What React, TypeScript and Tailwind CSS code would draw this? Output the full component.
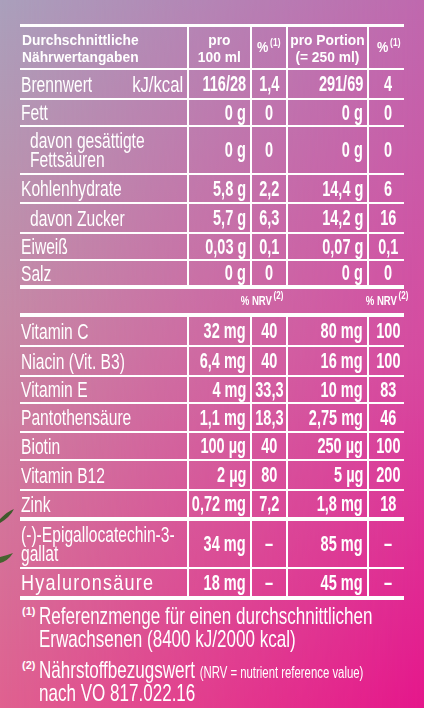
import React from 'react'

const GRID = 'grid grid-cols-[167px_63px_36px_81px_41px]'

type Row = {
  label: React.ReactNode
  v: string[]
  cls: string
  indent?: boolean
  unit?: string
  wide?: boolean
}

const top: Row[] = [
  { label: 'Brennwert', unit: 'kJ/kcal', v: ['116/28', '1,4', '291/69', '4'], cls: 'h-[30px] border-t-2' },
  { label: 'Fett', v: ['0 g', '0', '0 g', '0'], cls: 'h-[27px] border-t-2' },
  { label: <>davon gesättigte<br />Fettsäuren</>, indent: true, v: ['0 g', '0', '0 g', '0'], cls: 'h-[48px] border-t-2' },
  { label: 'Kohlenhydrate', v: ['5,8 g', '2,2', '14,4 g', '6'], cls: 'h-[29px] border-t-2' },
  { label: 'davon Zucker', indent: true, v: ['5,7 g', '6,3', '14,2 g', '16'], cls: 'h-[30px] border-t-2' },
  { label: 'Eiweiß', v: ['0,03 g', '0,1', '0,07 g', '0,1'], cls: 'h-[27px] border-t-2' },
  { label: 'Salz', v: ['0 g', '0', '0 g', '0'], cls: 'h-[30px] border-t-2 border-b-4' },
]

const vit: Row[] = [
  { label: 'Vitamin C', v: ['32 mg', '40', '80 mg', '100'], cls: 'h-[32px] border-t-4' },
  { label: 'Niacin (Vit. B3)', v: ['6,4 mg', '40', '16 mg', '100'], cls: 'h-[30px] border-t-2' },
  { label: 'Vitamin E', v: ['4 mg', '33,3', '10 mg', '83'], cls: 'h-[27px] border-t-2' },
  { label: 'Pantothensäure', v: ['1,1 mg', '18,3', '2,75 mg', '46'], cls: 'h-[29px] border-t-2' },
  { label: 'Biotin', v: ['100 µg', '40', '250 µg', '100'], cls: 'h-[28px] border-t-2' },
  { label: 'Vitamin B12', v: ['2 µg', '80', '5 µg', '200'], cls: 'h-[30px] border-t-2' },
  { label: 'Zink', v: ['0,72 mg', '7,2', '1,8 mg', '18'], cls: 'h-[28px] border-t-2' },
  { label: <>(-)-Epigallocatechin-3-<br />gallat</>, v: ['34 mg', '–', '85 mg', '–'], cls: 'h-[50px] border-t-4' },
  { label: 'Hyaluronsäure', wide: true, v: ['18 mg', '–', '45 mg', '–'], cls: 'h-[33px] border-t-2 border-b-4' },
]

function Sup({ n }: { n: string }) {
  return <span className="ml-[2px] inline-block -translate-y-[6px] text-[10px] font-bold">({n})</span>
}

function TableRow({ r }: { r: Row }) {
  return (
    <div className={`${GRID} border-white ${r.cls}`}>
      <div className={`flex items-center pr-[4px] text-[22px] leading-[19px] ${r.indent ? 'pl-[10px]' : 'pl-[1px]'}`}>
        <span className={`inline-block min-w-0 flex-1 origin-left whitespace-nowrap ${r.wide ? 'scale-x-[0.82] tracking-[1.5px]' : 'scale-x-[0.71]'}`}>{r.label}</span>
        {r.unit && <span className="inline-block shrink-0 origin-right scale-x-[0.76] whitespace-nowrap">{r.unit}</span>}
      </div>
      <div className="flex items-center justify-end border-l-2 border-white pr-[4px] text-[22px] font-bold leading-none">
        <span className="inline-block origin-right scale-x-[0.66] whitespace-nowrap">{r.v[0]}</span>
      </div>
      <div className="flex items-center justify-center border-l-2 border-white text-[22px] font-bold leading-none">
        <span className="inline-block origin-center scale-x-[0.66] whitespace-nowrap">{r.v[1]}</span>
      </div>
      <div className="flex items-center justify-end border-l-2 border-white pr-[4px] text-[22px] font-bold leading-none">
        <span className="inline-block origin-right scale-x-[0.66] whitespace-nowrap">{r.v[2]}</span>
      </div>
      <div className="flex items-center justify-center border-l-2 border-white text-[22px] font-bold leading-none">
        <span className="inline-block origin-center scale-x-[0.66] whitespace-nowrap">{r.v[3]}</span>
      </div>
    </div>
  )
}

export default function App() {
  return (
    <div className="relative h-[708px] w-[424px] overflow-hidden bg-[linear-gradient(to_bottom,#aaa0bc_0%,#c68aa6_45%,#e06190_100%)] font-['Liberation_Sans',Arial,sans-serif] text-white">
      <div className="absolute inset-0 bg-[linear-gradient(to_bottom,#bf68ae_0%,#d64aa0_50%,#e5168b_100%)] [mask-image:linear-gradient(to_right,transparent,black)]" />
      <svg className="absolute left-0 top-[505px]" width="16" height="60" viewBox="0 0 16 60">
        <path d="M0 14 Q8 6 14 4 Q10 12 0 18 Z" fill="#3f5a2c" />
        <path d="M0 52 Q8 50 13 48 Q8 56 0 58 Z" fill="#46632f" />
      </svg>

      <div className="relative px-[20px] pt-[24px] leading-none">
        <div className={`${GRID} h-[44px] border-t-[3px] border-white text-[15px] font-bold leading-[17px]`}>
          <div className="flex items-center pl-[2px]">
            <span className="inline-block origin-left scale-x-[0.92] whitespace-nowrap">Durchschnittliche<br />Nährwertangaben</span>
          </div>
          <div className="flex items-center justify-center border-l-2 border-white text-center">
            <span className="inline-block origin-center scale-x-[0.92] whitespace-nowrap">pro<br />100 ml</span>
          </div>
          <div className="flex items-center justify-center border-l-2 border-white">
            <span className="inline-block origin-center scale-x-[0.85] whitespace-nowrap">%<Sup n="1" /></span>
          </div>
          <div className="flex items-center justify-center border-l-2 border-white text-center">
            <span className="inline-block origin-center scale-x-[0.92] whitespace-nowrap">pro Portion<br />(= 250 ml)</span>
          </div>
          <div className="flex items-center justify-center border-l-2 border-white">
            <span className="inline-block origin-center scale-x-[0.85] whitespace-nowrap">%<Sup n="1" /></span>
          </div>
        </div>
        {top.map((r, i) => <TableRow key={i} r={r} />)}

        <div className={`${GRID} h-[24px] items-center text-[12px] font-bold`}>
          <div />
          <div className="col-span-2 flex justify-end pr-[3px]">
            <span className="inline-block origin-right scale-x-[0.8] whitespace-nowrap">% NRV<Sup n="2" /></span>
          </div>
          <div className="col-span-2 flex justify-end">
            <span className="inline-block origin-right scale-x-[0.8] whitespace-nowrap">% NRV<Sup n="2" /></span>
          </div>
        </div>
        {vit.map((r, i) => <TableRow key={i} r={r} />)}

        <div className="mt-[4px] flex flex-col gap-[8px] pl-[2px] text-[24px] leading-[23px]">
          <div className="flex">
            <span className="w-[17px] shrink-0 pt-[1px] text-[11px] font-bold leading-[12px]">(1)</span>
            <span className="inline-block origin-left scale-x-[0.71] whitespace-nowrap">Referenzmenge für einen durchschnittlichen<br />Erwachsenen (8400 kJ/2000 kcal)</span>
          </div>
          <div className="flex">
            <span className="w-[17px] shrink-0 pt-[1px] text-[11px] font-bold leading-[12px]">(2)</span>
            <span className="inline-block origin-left scale-x-[0.71] whitespace-nowrap">Nährstoffbezugswert <span className="text-[16px] leading-none">(NRV = nutrient reference value)</span><br />nach VO 817.022.16</span>
          </div>
        </div>
      </div>
    </div>
  )
}
